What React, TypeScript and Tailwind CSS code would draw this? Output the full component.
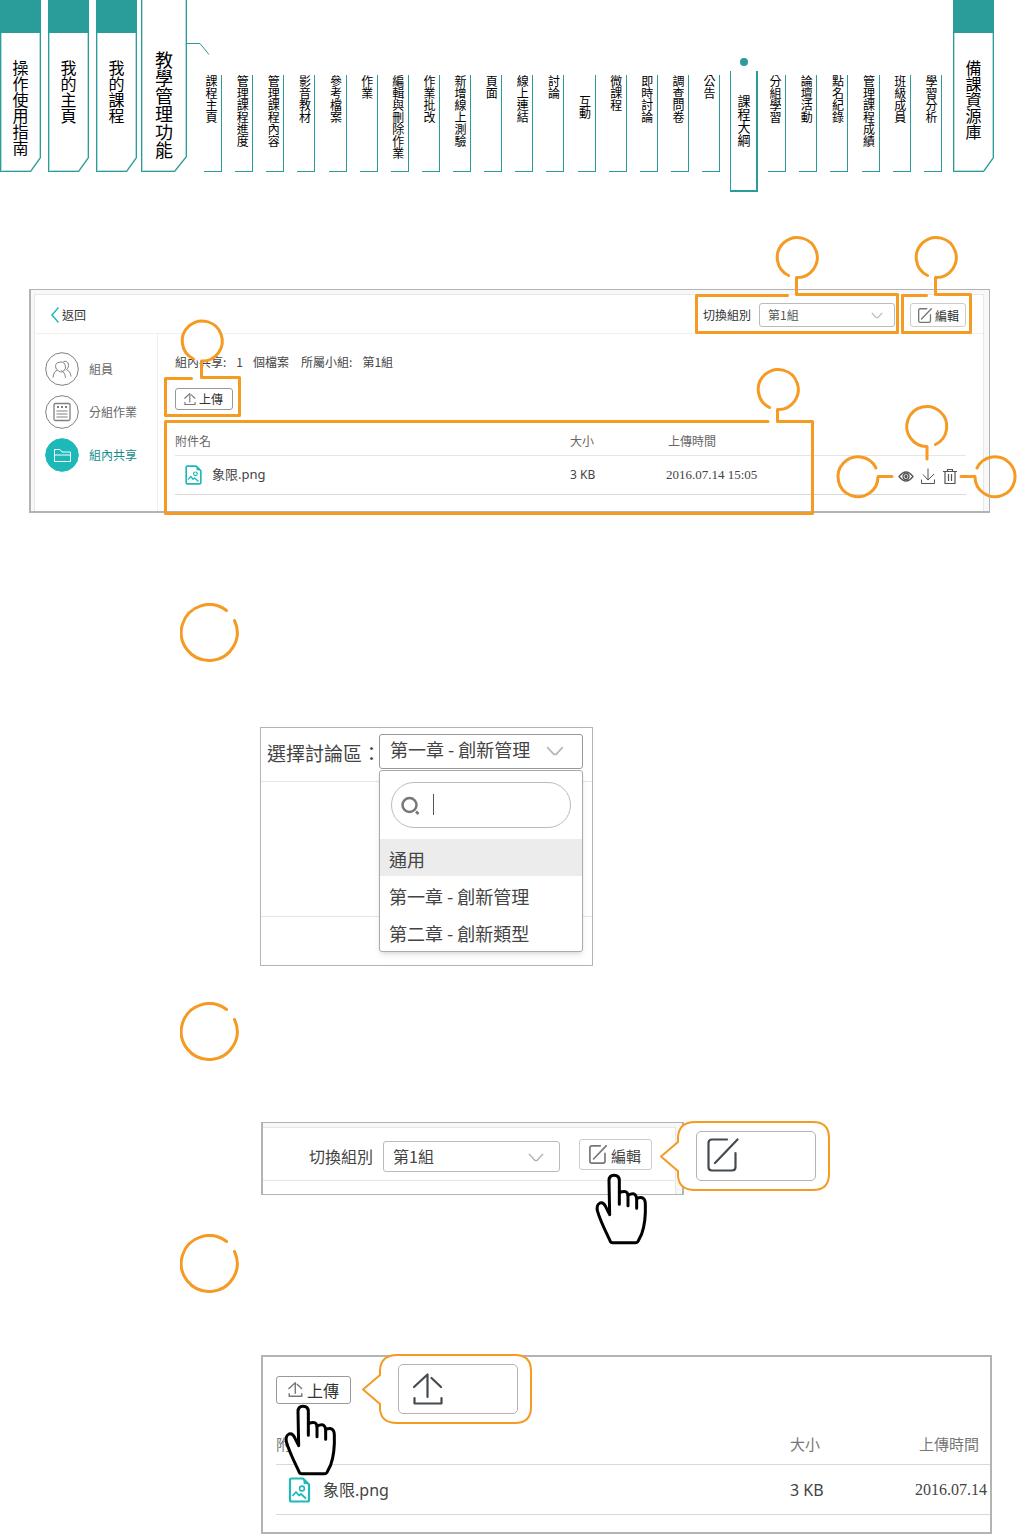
import React, { useState } from 'react';

const mainTabs = ['操作使用指南', '我的主頁', '我的課程'];

const leftTopics = [
  '課程主頁', '管理課程進度', '管理課程內容', '影音教材', '參考檔案', '作業',
  '編輯與刪除作業', '作業批改', '新增線上測驗', '頁面', '線上連結', '討論',
  '互動', '微課程', '即時討論', '調查問卷', '公告',
];

const rightTopics = ['分組學習', '論壇活動', '點名紀錄', '管理課程成績', '班級成員', '學習分析'];

const forumOptions = ['通用', '第一章 - 創新管理', '第二章 - 創新類型'];

/* ---------- Icons ---------- */

const EditIcon = ({ className }: { className: string }) => (
  <svg viewBox="0 0 32 34" className={className} fill="none" stroke="currentColor" strokeLinecap="round">
    <path d="M20 1.5H5Q1.500 1.500 1.500 5V29Q1.500 32.500 5 32.500H25Q28.500 32.500 28.500 29V15M8 25L30.500 1.500" />
  </svg>
);

const UploadIcon = ({ className }: { className: string }) => (
  <svg viewBox="0 0 30 32" className={className} fill="none" stroke="currentColor" strokeLinecap="round" strokeLinejoin="round">
    <path d="M1 14L14.500 1.500V24M18.500 5L28 14M1.500 25V30.500H28.500V25" />
  </svg>
);

const ChevronDown = ({ className }: { className: string }) => (
  <svg viewBox="0 0 16 9" className={className} fill="none" stroke="#b5b5b5" strokeWidth="1.5">
    <path d="M1 1L7 7.500H9L15 1" />
  </svg>
);

const ImageFileIcon = ({ className }: { className: string }) => (
  <svg viewBox="0 0 22 26" className={className} fill="none" stroke="#22b8b8" strokeWidth="2.2" strokeLinejoin="round">
    <path d="M1.500 3Q1.500 1.500 3 1.500H14.500L20.500 7.500V23Q20.500 24.500 19 24.500H3Q1.500 24.500 1.500 23Z" />
    <path d="M15.500 2V6.500H20Z" fill="#22b8b8" strokeWidth="1" />
    <circle cx="13.500" cy="11.500" r="2.400" strokeWidth="1.600" />
    <path d="M4 19L7.500 15L10.500 18.500L12.500 17L17.500 21.500" strokeWidth="1.800" />
  </svg>
);

const HandIcon = ({ className }: { className: string }) => (
  <svg viewBox="102 186 168 222" className={className} fill="none" stroke="#000" strokeWidth="9" strokeLinecap="round" strokeLinejoin="round">
    <path
      fill="#fff"
      d="M149 314L147 212Q147 196 162 196Q178 196 178 212V248Q202 238 204 256Q226 243 230 265Q256 256 256 282Q258 336 245 372L234 394Q232 398 228 398H158Q152 398 150 392L144 379Q120 330 112 302Q109 284 120 279Q131 276 137 290L149 314Z"
    />
    <path d="M178 248V283M204 256V287M230 265V295" />
  </svg>
);

/* ---------- Header ---------- */

const BookTab = ({ label }: { label: string }) => (
  <a
    href="#"
    className="block h-[172px] w-[41px] bg-[#2a9d9b] px-px pt-[33px] pb-px [clip-path:polygon(0_0,100%_0,100%_calc(100%-14px),calc(100%-10px)_100%,0_100%)]"
  >
    <span className="flex h-full justify-center border-x border-b border-[#b5dbda] bg-white pt-[27px] [clip-path:polygon(0_0,100%_0,100%_calc(100%-14px),calc(100%-10px)_100%,0_100%)]">
      <span className="text-[16px] leading-[18px] [writing-mode:vertical-rl]">{label}</span>
    </span>
  </a>
);

const Topic = ({ label }: { label: string }) => (
  <a
    href="#"
    className={`flex h-[97px] w-[18px] border-r border-b border-[#2a9d9b] pl-px ${label === '互動' ? 'pt-[20px]' : ''}`}
  >
    <span className="text-[12px] leading-[12px] [writing-mode:vertical-rl]">{label}</span>
  </a>
);

const Header = () => (
  <header className="flex items-start text-black">
    <div className="flex gap-[7px]">
      {mainTabs.map(tab => <BookTab key={tab} label={tab} />)}
    </div>
    <a
      href="#"
      className="ml-1 block h-[172px] w-[46px] bg-[#2a9d9b] px-px pb-px [clip-path:polygon(0_0,100%_0,100%_calc(100%-15px),calc(100%-12px)_100%,0_100%)]"
    >
      <span className="flex h-full justify-center border-x border-b border-[#b5dbda] bg-white pt-[51px] [clip-path:polygon(0_0,100%_0,100%_calc(100%-15px),calc(100%-12px)_100%,0_100%)]">
        <span className="text-[18px] leading-[20px] [writing-mode:vertical-rl]">教學管理功能</span>
      </span>
    </a>
    <nav className="relative ml-[17px] flex flex-1 items-start">
      <svg viewBox="0 0 24 14" className="absolute top-[42px] -left-[18px] h-[14px] w-[24px]" fill="none" stroke="#2a9d9b">
        <path d="M0 1.500H14L23 12.500" />
      </svg>
      <div className="flex flex-1 justify-between pt-[75px]">
        {leftTopics.map(topic => <Topic key={topic} label={topic} />)}
      </div>
      <a href="#" className="mx-[10px] flex flex-col items-center pt-[58px]">
        <span className="h-2 w-2 rounded-full bg-[#2a9d9b]" />
        <span className="mt-[5px] flex h-[121px] w-[28px] justify-center border-r-2 border-b-2 border-l border-[#2a9d9b] pt-[24px]">
          <span className="text-[13px] leading-[14px] [writing-mode:vertical-rl]">課程大綱</span>
        </span>
      </a>
      <div className="flex w-[174px] justify-between pt-[75px]">
        {rightTopics.map(topic => <Topic key={topic} label={topic} />)}
      </div>
    </nav>
    <div className="mr-[23px] ml-[11px]">
      <BookTab label="備課資源庫" />
    </div>
  </header>
);

/* ---------- Callouts ---------- */

interface CalloutProps {
  viewBox: string;
  d: string;
  circle?: [number, number];
  className: string;
}

const Callout = ({ viewBox, d, circle, className }: CalloutProps) => (
  <svg
    viewBox={viewBox}
    className={`pointer-events-none absolute max-w-none ${className}`}
    fill="none"
    stroke="#f59a22"
    strokeWidth="3"
    strokeLinecap="round"
    strokeLinejoin="round"
  >
    {circle && <circle cx={circle[0]} cy={circle[1]} r="20" fill="#fff" stroke="none" />}
    <path d={d} />
  </svg>
);

const StepMark = () => (
  <svg viewBox="0 0 60 60" className="h-[60px] w-[60px]" fill="none" stroke="#f59a22" strokeWidth="3" strokeLinecap="round">
    <path d="M46.500 7.500A28 28 0 1 0 54.500 17.500" />
  </svg>
);

const Bubble = ({ className, children }: { className: string; children: React.ReactNode }) => (
  <div className={`absolute h-[72px] w-[172px] pt-[11px] pl-[37px] ${className}`}>
    <svg viewBox="0 0 172 72" className="absolute inset-0 h-full w-full" fill="#fff" stroke="#f59a22" strokeWidth="2" strokeLinejoin="round">
      <path d="M2 36.500L19 22V17Q20 2 36 2H154Q170 2 170 18V54Q170 70 154 70H36Q20 70 19 56V51Z" />
    </svg>
    <div className="relative flex h-[50px] w-[120px] items-start rounded-[5px] border border-[#b3b3b3] bg-white text-[#444b50]">
      {children}
    </div>
  </div>
);

/* ---------- Main panel ---------- */

const SideItem = ({ label, active, children }: { label: string; active?: boolean; children: React.ReactNode }) => (
  <a href="#" className={`flex items-center gap-[10px] text-[12px] ${active ? 'text-[#168c8c]' : 'text-[#666]'}`}>
    <svg
      viewBox="0 0 34 34"
      className="h-[34px] w-[34px]"
      fill="none"
      stroke={active ? '#fff' : '#808080'}
    >
      <circle cx="17" cy="17" r="16.300" fill={active ? '#1db8b8' : '#fff'} stroke={active ? '#1db8b8' : '#808080'} />
      {children}
    </svg>
    {label}
  </a>
);

const SharePanel = () => (
  <section className="mt-[97px] mr-[27px] ml-[29px] border border-b-2 border-l-2 border-[#b3b3b3] bg-[#f8f8f8] pt-1 pr-[5px] pl-[3px]">
    <div className="border-x border-t border-[#e8e8e8] bg-white">
      <div className="flex h-[39px] items-center justify-between border-b border-[#f0f0f0] pt-[2px] pr-[17px] pl-4">
        <a href="#" className="flex items-center gap-[3px] text-[12px] text-[#333]">
          <svg viewBox="0 0 8 16" className="h-[16px] w-[8px]" fill="none" stroke="#22b8b8" strokeWidth="1.500">
            <path d="M7.500 0.500L1 8L7.500 15.500" />
          </svg>
          返回
        </a>
        <div className="flex items-center gap-[15px]">
          <div className="relative flex items-center gap-2 text-[12px] text-[#333]">
            <label htmlFor="group">切換組別</label>
            <div className="relative">
              <select id="group" className="block h-6 w-[136px] appearance-none rounded-[3px] border border-[#bbb] bg-white px-2 text-[#555]">
                <option>第1組</option>
              </select>
              <ChevronDown className="pointer-events-none absolute top-[9px] right-[12px] h-[7px] w-[12px]" />
            </div>
            <Callout
              viewBox="690 230 215 110"
              circle={[797, 257]}
              className="-top-[73px] -left-[13px] h-[110px] w-[215px]"
              d="M787.500 295.500H696.500V332.500H897.500V294.500H796.500V277.500A20 20 0 1 0 788.500 275.500"
            />
          </div>
          <div className="relative">
            <button className="flex h-6 w-[56px] items-center gap-[3px] rounded-[3px] border border-[#ccc] bg-white pl-[7px] text-[12px] text-[#333]">
              <EditIcon className="h-[15px] w-[14px] stroke-[3] text-[#777]" />
              <span className="pt-[2px]">編輯</span>
            </button>
            <Callout
              viewBox="897 230 80 110"
              circle={[936, 257]}
              className="-top-[73px] -left-[13px] h-[110px] w-[80px]"
              d="M926.500 295.500H902.500V332.500H970.500V294.500H935.500V277.500A20 20 0 1 0 927.500 275.500"
            />
          </div>
        </div>
      </div>

      <div className="flex">
        <aside className="flex w-[123px] shrink-0 flex-col gap-[9px] border-r border-[#f0f0f0] pt-[18px] pl-[10px]">
          <SideItem label="組員">
            <path d="M14 10.500A4.500 5 0 1 1 12.500 18C9.500 19 8.500 22 8 25.500M14 10.500C10 10.500 9.500 16 12.500 18M18.500 9.500C24 8 25 15 21.500 17.500C24.500 19 25.500 21 26 24.500M16.500 18.500C19 20 20 22 20.500 25.500" />
          </SideItem>
          <SideItem label="分組作業">
            <rect x="9" y="8.500" width="16" height="17" rx="1.500" strokeWidth="1.300" />
            <path d="M12 12H14M16 12H18M20 12H22" strokeWidth="2" />
            <path d="M11.500 16H22.500M11.500 19H22.500M11.500 22H22.500" />
          </SideItem>
          <SideItem label="組內共享" active>
            <path d="M9.500 23.500V11.500H15L17 14H25.500V23.500ZM9.500 17H25.500" />
          </SideItem>
        </aside>

        <div className="min-w-0 flex-1 px-[17px] pt-[19px] pb-4">
          <p className="flex text-[12px] leading-[18px] text-[#444]">
            <span>組內共享:</span>
            <span className="ml-[10px]">1</span>
            <span className="ml-[10px]">個檔案</span>
            <span className="ml-3">所屬小組:</span>
            <span className="ml-[10px]">第1組</span>
          </p>
          <div className="relative mt-[17px] w-[58px]">
            <button className="flex h-[22px] w-[58px] items-center gap-[3px] rounded-[3px] border border-[#999] bg-white pl-2 text-[12px] text-[#333]">
              <UploadIcon className="h-[12px] w-[12px] stroke-[3] text-[#777]" />
              上傳
            </button>
            <Callout
              viewBox="160 315 90 105"
              circle={[202, 341]}
              className="-top-[73px] -left-[15px] h-[105px] w-[90px]"
              d="M191.500 378.500H165.500V415.500H239.500V377.500H201.500V361A20 20 0 1 0 193.500 359"
            />
          </div>

          <div className="relative mt-[17px]">
            <table className="w-full table-fixed text-left text-[12px]">
              <thead>
                <tr className="h-[28px] border-b border-[#e6e6e6] text-[#666]">
                  <th className="font-normal">附件名</th>
                  <th className="w-[96px] font-normal">大小</th>
                  <th className="w-[200px] pl-[2px] font-normal">上傳時間</th>
                  <th className="w-[100px] font-normal" aria-label="操作" />
                </tr>
              </thead>
              <tbody>
                <tr className="h-[39px] border-b border-[#d9d9d9] text-[#444]">
                  <td>
                    <span className="flex items-center gap-[10px] pl-[10px] font-['Noto_Sans','Noto_Sans_CJK_TC',sans-serif] text-[13px]">
                      <ImageFileIcon className="h-[20px] w-[17px]" />
                      象限.png
                    </span>
                  </td>
                  <td className="font-['Noto_Sans',sans-serif]">3 KB</td>
                  <td className="font-['Liberation_Serif',serif] text-[13px]">2016.07.14 15:05</td>
                  <td>
                    <div className="flex justify-end gap-[6px] pt-[2px] pr-2 text-[#555]">
                      <button aria-label="預覽" className="relative h-4 w-4">
                        <svg viewBox="0 0 16 16" className="h-4 w-4" fill="none" stroke="currentColor" strokeWidth="1.300">
                          <path d="M1 8.500Q8 -0.500 15 8.500Q8 17.500 1 8.500Z" />
                          <circle cx="8" cy="8.500" r="3" />
                          <circle cx="8" cy="8.500" r="1" fill="currentColor" />
                        </svg>
                        <Callout
                          viewBox="830 450 68 52"
                          className="-top-[18px] -left-[68px] h-[52px] w-[68px]"
                          d="M892 476.500H878A20 20 0 1 1 876 468"
                        />
                      </button>
                      <button aria-label="下載" className="relative h-4 w-4">
                        <svg viewBox="0 0 16 16" className="h-4 w-4" fill="none" stroke="currentColor">
                          <path d="M8 0.500V12M3 6.500L8 12L14 6M1.500 11.500V15.500H14.500V11.500" />
                        </svg>
                        <Callout
                          viewBox="900 400 50 65"
                          className="-top-[68px] -left-[20px] h-[65px] w-[50px]"
                          d="M927 459V446.500A20 20 0 1 1 935.500 444.500"
                        />
                      </button>
                      <button aria-label="刪除" className="relative h-4 w-4">
                        <svg viewBox="0 0 16 16" className="h-4 w-4" fill="none" stroke="currentColor" strokeWidth="1.200">
                          <path d="M1 3.500H15M5.500 3.500V1.500H10.500V3.500M3 3.500V15.500H13V3.500M6.500 6V13M9.500 6V13" />
                        </svg>
                        <Callout
                          viewBox="955 450 62 52"
                          className="-top-[18px] left-[13px] h-[52px] w-[62px]"
                          d="M961 476.500H975A20 20 0 1 0 977 468"
                        />
                      </button>
                    </div>
                  </td>
                </tr>
              </tbody>
            </table>
            <Callout
              viewBox="160 365 660 155"
              circle={[778, 389]}
              className="-top-[62px] -left-[15px] h-[155px] w-[660px]"
              d="M768 421.500H165.500V513.500H812.500V421.500H777.500V409.500A20 20 0 1 0 769.500 407.500"
            />
          </div>
        </div>
      </div>
    </div>
  </section>
);

/* ---------- Figures ---------- */

const ForumFigure = () => {
  const [selected, setSelected] = useState('第一章 - 創新管理');
  const [hovered, setHovered] = useState('通用');

  return (
    <div className="ml-20 h-[239px] w-[333px] border border-[#b3b3b3] bg-white text-[#444]">
      <div className="flex h-[54px] items-start border-b border-[#e6e6e6] pt-[6px] pl-[6px]">
        <span id="forum-label" className="w-[112px] shrink-0 text-[19px] leading-[38px] whitespace-nowrap">選擇討論區：</span>
        <div className="relative">
          <button
            aria-labelledby="forum-label"
            aria-expanded="true"
            className="flex h-[35px] w-[204px] items-center justify-between rounded-[3px] border border-[#999] bg-white pr-[18px] pl-[10px] text-[18px]"
          >
            <span className="pb-[3px]">{selected}</span>
            <ChevronDown className="h-[10px] w-[18px]" />
          </button>
          <div className="absolute top-[36px] left-0 h-[182px] w-[204px] rounded-[3px] border border-[#aaa] bg-white pt-[11px] shadow-md">
            <div className="relative mx-[11px] flex h-[46px] items-center rounded-full border border-[#bbb] pl-[9px]">
              <svg viewBox="0 0 20 20" className="h-5 w-5 shrink-0" fill="none" stroke="#777" strokeWidth="2.500">
                <circle cx="8.500" cy="10" r="7" />
                <path d="M15 16.500L17.500 19" />
              </svg>
              <input aria-label="搜尋" className="ml-[14px] w-[110px] text-[16px] outline-none" />
              <span className="absolute left-[41px] h-[21px] w-px bg-[#555]" />
            </div>
            <ul className="mt-[11px]">
              {forumOptions.map(option => (
                <li key={option}>
                  <button
                    onClick={() => setSelected(option)}
                    onMouseEnter={() => setHovered(option)}
                    className={`block h-[37px] w-full pt-[4px] pl-[9px] text-left text-[18px] leading-[33px] ${hovered === option ? 'bg-[#ececec]' : ''}`}
                  >
                    {option}
                  </button>
                </li>
              ))}
            </ul>
          </div>
        </div>
      </div>
      <div className="h-[135px] border-b border-[#e6e6e6]" />
    </div>
  );
};

const EditFigure = () => (
  <div className="relative ml-[81px] h-[73px] w-[423px] border border-x-2 border-[#b3b3b3] bg-[#f8f8f8] pt-1 pr-[6px]">
    <div className="h-full border-t border-r border-[#e6e6e6] bg-white">
      <div className="flex h-[53px] items-center justify-end border-b border-[#e6e6e6] pt-[5px] pr-[23px] text-[16px] text-[#444]">
        <label htmlFor="group-large">切換組別</label>
        <div className="relative ml-[10px]">
          <select id="group-large" className="block h-[31px] w-[177px] appearance-none rounded-[3px] border border-[#bbb] bg-white px-[9px]">
            <option>第1組</option>
          </select>
          <ChevronDown className="pointer-events-none absolute top-[12px] right-[16px] h-[9px] w-[16px]" />
        </div>
        <button className="mb-1 ml-[19px] flex h-[31px] w-[73px] items-center gap-[4px] rounded-[3px] border border-[#ccc] bg-white pl-[9px] text-[15px]">
          <EditIcon className="h-[19px] w-[18px] stroke-[3] text-[#777]" />
          <span className="pt-[5px]">編輯</span>
        </button>
      </div>
    </div>
    <HandIcon className="absolute top-[49px] left-[331px] h-[74px] w-[56px]" />
    <Bubble className="-top-[3px] left-[396px]">
      <EditIcon className="mt-[6px] ml-[10px] h-[34px] w-[32px] stroke-[2.2]" />
    </Bubble>
  </div>
);

const UploadFigure = () => (
  <div className="relative mr-[25px] ml-[81px] h-[179px] border-2 border-[#b3b3b3] bg-white pt-[19px] pl-[13px]">
    <button className="flex h-[28px] w-[75px] items-center gap-[4px] rounded-[3px] border border-[#999] bg-white pl-[11px] text-[16px] text-[#333]">
      <UploadIcon className="h-[15px] w-[15px] stroke-[3] text-[#777]" />
      上傳
    </button>
    <div className="mt-[20px] overflow-hidden">
      <table className="w-full table-fixed text-left whitespace-nowrap">
        <thead>
          <tr className="h-[41px] border-b border-[#d9d9d9] text-[15px] text-[#777]">
            <th className="font-normal">附件名</th>
            <th className="w-[125px] font-normal">大小</th>
            <th className="w-[75px] pl-1 font-normal">上傳時間</th>
          </tr>
        </thead>
        <tbody>
          <tr className="h-[50px] border-b border-[#d9d9d9] text-[16px] text-[#444]">
            <td>
              <span className="flex items-center gap-[12px] pl-[12px] font-['Noto_Sans','Noto_Sans_CJK_TC',sans-serif]">
                <ImageFileIcon className="h-[26px] w-[23px]" />
                象限.png
              </span>
            </td>
            <td className="font-['Noto_Sans',sans-serif]">3 KB</td>
            <td className="font-['Liberation_Serif',serif]">2016.07.14</td>
          </tr>
        </tbody>
      </table>
    </div>
    <HandIcon className="absolute top-[46px] left-[20px] h-[74px] w-[56px]" />
    <Bubble className="-top-[4px] left-[98px]">
      <UploadIcon className="mt-[8px] ml-[14px] h-[32px] w-[30px] stroke-[2.2]" />
    </Bubble>
  </div>
);

export default function App() {
  return (
    <div className="overflow-x-hidden bg-white font-['Noto_Sans_CJK_TC',sans-serif]">
      <Header />
      <main>
        <SharePanel />
        <div className="mt-[90px] pl-[180px]">
          <StepMark />
          <div className="mt-[64px]">
            <ForumFigure />
          </div>
        </div>
        <div className="mt-[36px] pl-[180px]">
          <StepMark />
          <div className="mt-[60px]">
            <EditFigure />
          </div>
        </div>
        <div className="mt-[39px] pl-[180px]">
          <StepMark />
          <div className="mt-[61px]">
            <UploadFigure />
          </div>
        </div>
      </main>
    </div>
  );
}
